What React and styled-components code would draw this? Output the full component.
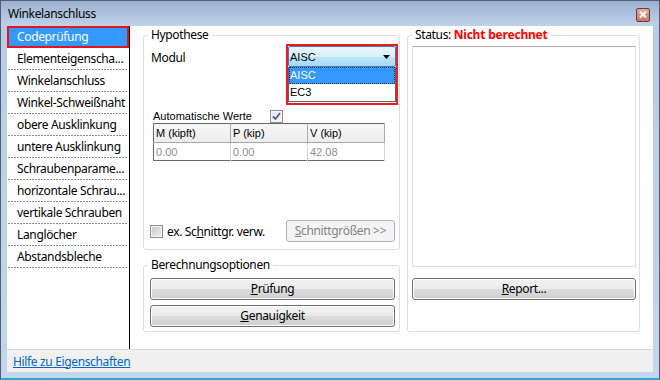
import React from "react";
import styled, { createGlobalStyle } from "styled-components";

const GlobalStyle = createGlobalStyle`
  html, body {
    margin: 0;
    padding: 0;
    background: #fff;
  }
  body {
    font-family: "Noto Sans", "Open Sans", sans-serif;
    font-size: 12px;
    letter-spacing: -0.35px;
    color: #000;
  }
  * {
    box-sizing: border-box;
  }
`;

const Window = styled.div`
    width: 660px;
    height: 380px;
    border: 1px solid #4f5e72;
    border-bottom: 2px solid #2aa6d1;
    background: linear-gradient(to bottom, #b6cbe4, #c3d6ec);
    display: flex;
    flex-direction: column;
`;

const TitleBar = styled.div`
    height: 25px;
    padding: 0 9px 0 7px;
    display: flex;
    align-items: center;
    justify-content: space-between;
    background: linear-gradient(to bottom, #9bb2cf, #bed2e9);
    line-height: 16px;
`;

const CloseButton = styled.div`
    width: 14px;
    height: 14px;
    margin-top: 2px;
    border: 1px solid #6e3a35;
    border-radius: 2px;
    background: linear-gradient(to bottom, #e2aaa3, #c9776d);
    display: flex;
    align-items: center;
    justify-content: center;
`;

const Client = styled.div`
    flex: 1;
    margin: 0 6px 6px;
    background: #fff;
    display: flex;
    flex-direction: column;
    min-height: 0;
`;

const Body = styled.div`
    flex: 1;
    display: flex;
    min-height: 0;
`;

const Nav = styled.div`
    width: 123px;
    border-right: 1px solid #000;
    display: flex;
    flex-direction: column;
`;

const NavItem = styled.div`
    height: 22px;
    line-height: 21px;
    padding-left: 10px;
    white-space: nowrap;
    overflow: hidden;
    color: ${(p) => (p.$active ? "#fff" : "#000")};
    background-color: ${(p) => (p.$active ? "#3399ff" : "transparent")};
    box-shadow: ${(p) => (p.$active ? "inset 0 0 0 2px #e8141c" : "none")};
    background-image: ${(p) =>
        p.$active
            ? "none"
            : "repeating-linear-gradient(to right, #8c8c8c 0 2px, transparent 2px 3px)"};
    background-size: calc(100% - 2px) 1px;
    background-position: 1px 100%;
    background-repeat: no-repeat;
`;

const Main = styled.div`
    flex: 1;
    display: grid;
    grid-template-columns: 257px 233px;
    column-gap: 7px;
    align-content: start;
    padding: 9px 13px 0;
`;

const Column = styled.div`
    display: flex;
    flex-direction: column;
    gap: 15px;
`;

const Group = styled.div`
    height: ${(p) => p.$h}px;
    border: 1px solid #d5dfe5;
    border-radius: 3px;
    padding: ${(p) => p.$pad};
    display: flex;
    flex-direction: column;
`;

const GroupTitle = styled.div`
    align-self: flex-start;
    margin: -9px 0 0 ${(p) => p.$ml}px;
    padding: 0 3px;
    line-height: 16px;
    background: #fff;
    white-space: nowrap;
`;

const StatusText = styled.span`
    color: #ff0000;
    font-weight: bold;
    letter-spacing: -0.2px;
`;

const ModulRow = styled.div`
    margin-top: 1px;
    display: flex;
    justify-content: space-between;
    align-items: flex-start;
`;

const Label = styled.span`
    padding-top: ${(p) => p.$top || 0}px;
    line-height: 16px;
`;

const DropHighlight = styled.div`
    width: 112px;
    border: 2px solid #ec1c24;
    background: #fff;
    padding-bottom: 1px;
`;

const Combo = styled.div`
    height: 21px;
    border: 1px solid #3c7fb1;
    border-radius: 2px;
    background: linear-gradient(
        to bottom,
        #eaf6fd 0%,
        #d9f0fc 50%,
        #bee6fd 50%,
        #a7d9f5 100%
    );
    display: flex;
    align-items: center;
    justify-content: space-between;
    padding: 0 5px 0 1px;
    font-family: "Liberation Sans", Arial, sans-serif;
    font-size: 11px;
    letter-spacing: 0;
`;

const ListBox = styled.div`
    border: 1px solid #646464;
    border-top: none;
    font-family: "Liberation Sans", Arial, sans-serif;
    font-size: 11px;
    letter-spacing: 0;
`;

const ListItem = styled.div`
    height: 17px;
    line-height: 17px;
    padding-left: 1px;
    color: ${(p) => (p.$selected ? "#fff" : "#000")};
    background: ${(p) => (p.$selected ? "#3399ff" : "#fff")};
    outline: ${(p) => (p.$selected ? "1px dotted #1b2f55" : "none")};
    outline-offset: -1px;
`;

const SmallRow = styled.div`
    margin-top: 4px;
    height: 14px;
    padding-left: 2px;
    display: flex;
    align-items: center;
    font-family: "Liberation Sans", Arial, sans-serif;
    font-size: 11px;
    letter-spacing: 0;
`;

const SmallLabel = styled.span`
    width: ${(p) => p.$w}px;
`;

const CheckBox = styled.span`
    width: 13px;
    height: 13px;
    border: 1px solid #8e8f8f;
    background: ${(p) =>
        p.$checked
            ? "linear-gradient(135deg, #e4e6ea, #fbfbfb)"
            : "linear-gradient(135deg, #c9c9c9, #eeeeee)"};
    box-shadow: inset 0 0 0 1px #f4f4f4;
    display: flex;
    align-items: center;
    justify-content: center;
    flex: none;
`;

const Table = styled.table`
    margin-left: 2px;
    width: 232px;
    border-collapse: collapse;
    border: 1px solid #6a6a6a;
    font-family: "Liberation Sans", Arial, sans-serif;
    font-size: 11px;
    letter-spacing: 0;
    table-layout: fixed;
`;

const Th = styled.th`
    height: 19px;
    padding: 0 2px;
    text-align: left;
    font-weight: normal;
    background: linear-gradient(to bottom, #f7f7f7, #ececec);
    border-right: 1px solid #a9a9a9;
    border-bottom: 1px solid #a9a9a9;
`;

const Td = styled.td`
    height: 18px;
    padding: 0 2px;
    color: #8d8d8d;
    border-right: 1px solid #d4d4d4;
`;

const BottomRow = styled.div`
    margin-top: auto;
    display: flex;
    align-items: center;
    justify-content: space-between;
    padding-right: 3px;
`;

const CheckLabel = styled.label`
    display: flex;
    align-items: center;
    gap: 4px;
    margin-left: -1px;
`;

const Button = styled.button`
    width: ${(p) => (p.$w ? `${p.$w}px` : "100%")};
    height: 22px;
    margin: 0;
    padding: 0;
    border: 1px solid ${(p) => (p.disabled ? "#adb2b5" : "#707070")};
    border-radius: 3px;
    background: ${(p) =>
        p.disabled
            ? "#f4f4f4"
            : "linear-gradient(to bottom, #f2f2f2 0%, #ebebeb 50%, #dddddd 50%, #cfcfcf 100%)"};
    box-shadow: inset 0 0 0 1px ${(p) => (p.disabled ? "#f4f4f4" : "#fcfcfc")};
    color: ${(p) => (p.disabled ? "#838383" : "#000")};
    font-family: "Noto Sans", "Open Sans", sans-serif;
    font-size: 12px;
    letter-spacing: -0.35px;
    line-height: 16px;
`;

const ButtonStack = styled.div`
    margin-top: 5px;
    display: flex;
    flex-direction: column;
    gap: 5px;
`;

const StatusBox = styled.div`
    margin-top: 3px;
    height: 221px;
    border: 1px solid #d9dde2;
    border-top-color: #abadb3;
    background: #fff;
`;

const ReportWrap = styled.div`
    margin-top: 11px;
`;

const Footer = styled.div`
    height: 23px;
    border-top: 1px solid #d5d5d5;
    background: #f0f0f0;
    padding-left: 6px;
    display: flex;
    align-items: center;
`;

const HelpLink = styled.a`
    color: #0066cc;
    text-decoration: underline;
    cursor: pointer;
`;

const navItems = [
    "Codeprüfung",
    "Elementeigenscha...",
    "Winkelanschluss",
    "Winkel-Schweißnaht",
    "obere Ausklinkung",
    "untere Ausklinkung",
    "Schraubenparame...",
    "horizontale Schrau...",
    "vertikale Schrauben",
    "Langlöcher",
    "Abstandsbleche",
];

const Check = () => (
    <svg width="9" height="9" viewBox="0 0 9 9">
        <path d="M1 4.5 L3.5 7 L8 1" fill="none" stroke="#4b5f97" strokeWidth="1.8" />
    </svg>
);

const Arrow = () => (
    <svg width="7" height="4" viewBox="0 0 7 4">
        <path d="M0 0 H7 L3.5 4 Z" fill="#000" />
    </svg>
);

const CloseX = () => (
    <svg width="8" height="7" viewBox="0 0 8 7">
        <path d="M1 0.5 L7 6.5 M7 0.5 L1 6.5" stroke="#fff" strokeWidth="2" />
    </svg>
);

export default function App() {
    return (
        <>
            <GlobalStyle />
            <Window>
                <TitleBar>
                    <span>Winkelanschluss</span>
                    <CloseButton>
                        <CloseX />
                    </CloseButton>
                </TitleBar>
                <Client>
                    <Body>
                        <Nav>
                            {navItems.map((item, i) => (
                                <NavItem key={item} $active={i === 0}>
                                    {item}
                                </NavItem>
                            ))}
                        </Nav>
                        <Main>
                            <Column>
                                <Group $h={215} $pad="0 1px 7px 7px">
                                    <GroupTitle $ml={-3}>Hypothese</GroupTitle>
                                    <ModulRow>
                                        <Label $top={6}>Modul</Label>
                                        <DropHighlight>
                                            <Combo>
                                                <span>AISC</span>
                                                <Arrow />
                                            </Combo>
                                            <ListBox>
                                                <ListItem $selected>AISC</ListItem>
                                                <ListItem>EC3</ListItem>
                                            </ListBox>
                                        </DropHighlight>
                                    </ModulRow>
                                    <SmallRow>
                                        <SmallLabel $w={117}>Automatische Werte</SmallLabel>
                                        <CheckBox $checked>
                                            <Check />
                                        </CheckBox>
                                    </SmallRow>
                                    <Table>
                                        <thead>
                                            <tr>
                                                <Th>M (kipft)</Th>
                                                <Th>P (kip)</Th>
                                                <Th>V (kip)</Th>
                                            </tr>
                                        </thead>
                                        <tbody>
                                            <tr>
                                                <Td>0.00</Td>
                                                <Td>0.00</Td>
                                                <Td>42.08</Td>
                                            </tr>
                                        </tbody>
                                    </Table>
                                    <BottomRow>
                                        <CheckLabel>
                                            <CheckBox />
                                            <span>
                                                ex. Sc<u>h</u>nittgr. verw.
                                            </span>
                                        </CheckLabel>
                                        <Button $w={109} disabled>
                                            <u>S</u>chnittgrößen &gt;&gt;
                                        </Button>
                                    </BottomRow>
                                </Group>
                                <Group $h={67} $pad="0 4px 0 6px">
                                    <GroupTitle $ml={-2}>Berechnungsoptionen</GroupTitle>
                                    <ButtonStack>
                                        <Button>
                                            <u>P</u>rüfung
                                        </Button>
                                        <Button>
                                            <u>G</u>enauigkeit
                                        </Button>
                                    </ButtonStack>
                                </Group>
                            </Column>
                            <Group $h={297} $pad="0 3px 0 4px">
                                <GroupTitle $ml={0}>
                                    Status: <StatusText>Nicht berechnet</StatusText>
                                </GroupTitle>
                                <StatusBox />
                                <ReportWrap>
                                    <Button>
                                        <u>R</u>eport...
                                    </Button>
                                </ReportWrap>
                            </Group>
                        </Main>
                    </Body>
                    <Footer>
                        <HelpLink>Hilfe zu Eigenschaften</HelpLink>
                    </Footer>
                </Client>
            </Window>
        </>
    );
}
